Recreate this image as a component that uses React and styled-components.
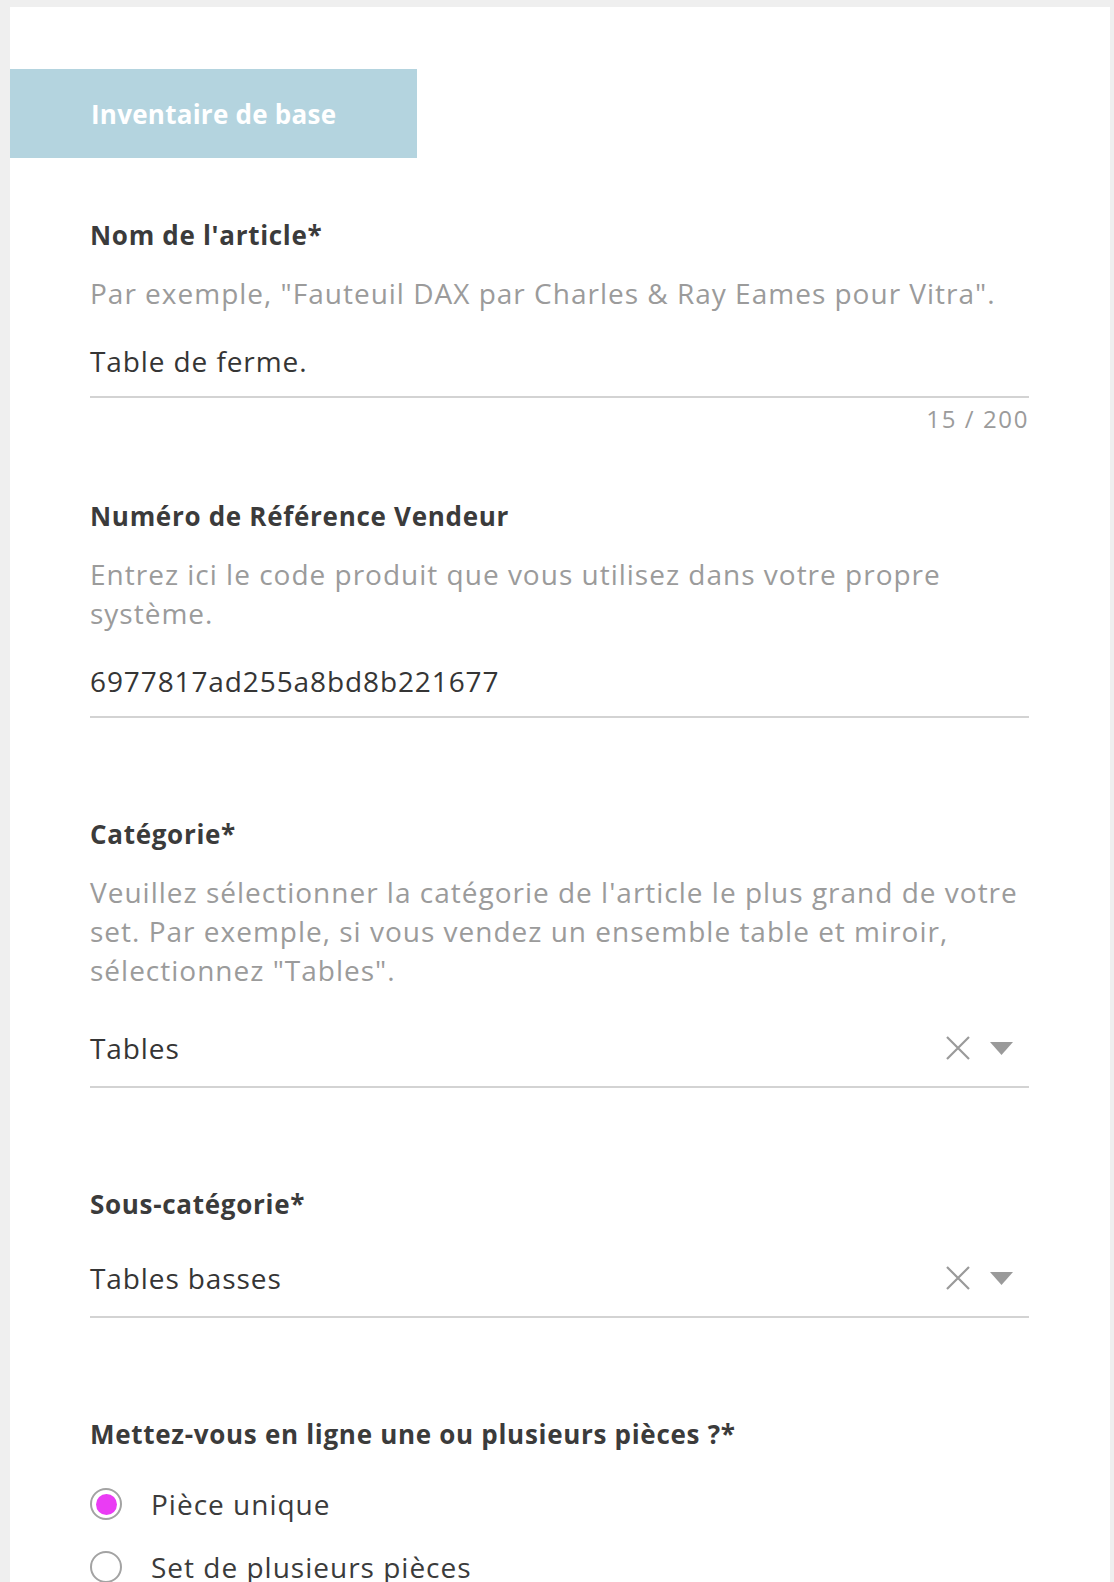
import React from "react";
import styled, { createGlobalStyle } from "styled-components";

const Global = createGlobalStyle`
  html, body { margin: 0; padding: 0; background: #efefef; }
  body { font-family: "Open Sans", Lato, sans-serif; -webkit-font-smoothing: antialiased; }
  * { box-sizing: border-box; }
`;

const Page = styled.div`
  padding: 7px 4px 0 10px;
`;

const Card = styled.div`
  background: #fff;
  padding-top: 62px;
  min-height: 1700px;
`;

const Banner = styled.div`
  width: 407px;
  height: 89px;
  background: #b4d4df;
  color: #fff;
  display: flex;
  align-items: center;
  padding-left: 81px;
  font-size: 26px;
  font-weight: 700;
  letter-spacing: 0.25px;
`;

const Form = styled.div`
  display: flex;
  flex-direction: column;
  padding: 61px 81px 0 80px;
`;

const Field = styled.section`
  display: flex;
  flex-direction: column;
  margin-bottom: ${(p) => p.$after}px;
`;

const Label = styled.div`
  font-size: 26px;
  line-height: 32px;
  font-weight: 700;
  color: #3b3b3b;
  letter-spacing: 0.7px;
`;

const Help = styled.div`
  margin-top: 23px;
  font-size: 28px;
  line-height: 39px;
  color: #9b9b9b;
  letter-spacing: 1px;
`;

const InputRow = styled.div`
  margin-top: 16px;
  padding: 16px 0 19px;
  border-bottom: 2px solid #d3d3d3;
  font-size: 28px;
  line-height: 32px;
  color: #353535;
  letter-spacing: 0.9px;
`;

const SelectRow = styled.div`
  margin-top: 20px;
  padding: 22px 16px 22px 0;
  border-bottom: 2px solid #d3d3d3;
  display: flex;
  align-items: center;
  font-size: 28px;
  line-height: 32px;
  color: #353535;
  letter-spacing: 0.9px;
`;

const SelectValue = styled.div`
  flex: 1;
`;

const Icons = styled.div`
  display: flex;
  align-items: center;
  gap: 20px;
`;

const Counter = styled.div`
  margin-top: 7px;
  align-self: flex-end;
  font-size: 24px;
  line-height: 28px;
  color: #9b9b9b;
  letter-spacing: 1.6px;
`;

const RadioList = styled.div`
  margin-top: 34px;
  display: flex;
  flex-direction: column;
  gap: 23px;
`;

const RadioRow = styled.label`
  display: flex;
  align-items: center;
  gap: 29px;
  font-size: 28px;
  line-height: 40px;
  color: #3b3b3b;
  letter-spacing: 1px;
`;

const RadioCircle = styled.span`
  width: 32px;
  height: 32px;
  border-radius: 50%;
  border: 2px solid #a3a3a3;
  background: #fff;
  display: flex;
  align-items: center;
  justify-content: center;
  flex-shrink: 0;
  &::after {
    content: "";
    width: 21px;
    height: 21px;
    border-radius: 50%;
    background: ${(p) => (p.$checked ? "#ea3cf4" : "transparent")};
  }
`;

const ClearIcon = () => (
  <svg width="24" height="24" viewBox="0 0 24 24">
    <path d="M1 1 L23 23 M23 1 L1 23" stroke="#9a9a9a" strokeWidth="2.2" fill="none" />
  </svg>
);

const Caret = () => (
  <svg width="23" height="13" viewBox="0 0 23 13">
    <polygon points="0,0 23,0 11.5,13" fill="#9a9a9a" />
  </svg>
);

const Select = ({ value }) => (
  <SelectRow>
    <SelectValue>{value}</SelectValue>
    <Icons>
      <ClearIcon />
      <Caret />
    </Icons>
  </SelectRow>
);

export default function App() {
  return (
    <>
      <Global />
      <Page>
        <Card>
          <Banner>Inventaire de base</Banner>
          <Form>
            <Field $after={67}>
              <Label>Nom de l'article*</Label>
              <Help>Par exemple, "Fauteuil DAX par Charles &amp; Ray Eames pour Vitra".</Help>
              <InputRow>Table de ferme.</InputRow>
              <Counter>15 / 200</Counter>
            </Field>
            <Field $after={100}>
              <Label>Numéro de Référence Vendeur</Label>
              <Help>Entrez ici le code produit que vous utilisez dans votre propre système.</Help>
              <InputRow>6977817ad255a8bd8b221677</InputRow>
            </Field>
            <Field $after={100}>
              <Label>Catégorie*</Label>
              <Help>
                Veuillez sélectionner la catégorie de l'article le plus grand de votre set. Par exemple, si vous
                vendez un ensemble table et miroir, sélectionnez "Tables".
              </Help>
              <Select value="Tables" />
            </Field>
            <Field $after={100}>
              <Label>Sous-catégorie*</Label>
              <Select value="Tables basses" />
            </Field>
            <Field $after={60}>
              <Label>Mettez-vous en ligne une ou plusieurs pièces ?*</Label>
              <RadioList>
                <RadioRow>
                  <RadioCircle $checked />
                  Pièce unique
                </RadioRow>
                <RadioRow>
                  <RadioCircle />
                  Set de plusieurs pièces
                </RadioRow>
              </RadioList>
            </Field>
          </Form>
        </Card>
      </Page>
    </>
  );
}
